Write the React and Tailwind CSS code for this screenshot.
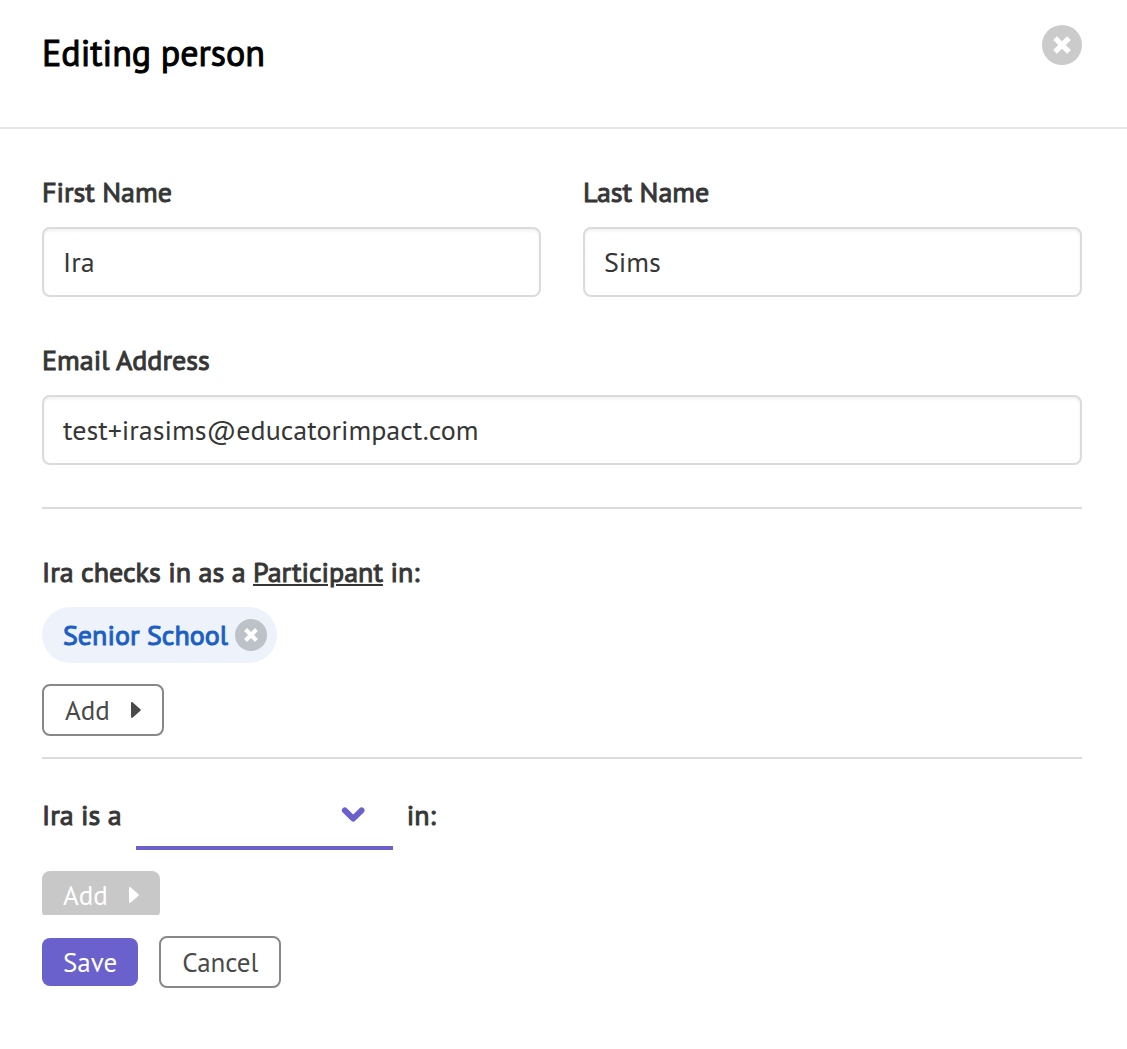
const strong = '[-webkit-text-stroke:1px_currentColor]'
const labelClass = `block text-[28px] leading-[34px] ${strong}`
const inputClass =
  'mt-[18px] block h-[70px] w-full rounded-lg border-2 border-[#dbdbdb] bg-white px-[19px] pb-0.5 text-[28px] text-[#363636] shadow-[inset_0_2px_3px_rgba(10,10,10,0.06)] outline-none'
const outlineButton = 'h-[52px] rounded-lg border-2 border-[#888] px-[21px] text-[27px] text-[#4a4a4a]'

function Cross({ size }) {
  return (
    <svg width={size} height={size} viewBox="0 0 17 17" fill="none" stroke="currentColor" aria-hidden="true">
      <path d="M1.9 1.9L15.1 15.1M15.1 1.9L1.9 15.1" strokeWidth="5" />
    </svg>
  )
}

function Caret() {
  return (
    <svg width="10" height="16" viewBox="0 0 10 16" fill="currentColor" aria-hidden="true">
      <path d="M0 1.2C0 .2 1 -.3 1.8 .4L9.4 7.2C9.9 7.7 9.9 8.3 9.4 8.8L1.8 15.6C1 16.3 0 15.8 0 14.8Z" />
    </svg>
  )
}

function Field({ id, label, value, type = 'text' }) {
  return (
    <div>
      <label htmlFor={id} className={labelClass}>
        {label}
      </label>
      <input id={id} type={type} defaultValue={value} className={inputClass} />
    </div>
  )
}

export default function App() {
  return (
    <div className="w-full bg-white pb-[61px] font-['PT_Sans','Noto_Sans',sans-serif] text-[#363636]">
      <header className="flex h-[129px] items-start justify-between border-b-2 border-[#e6e6e6] pl-[42px] pr-[45px] pt-[25px]">
        <h1 className={`text-4xl leading-[56px] text-black ${strong}`}>Editing person</h1>
        <button
          type="button"
          aria-label="Close"
          className="flex size-10 items-center justify-center rounded-full bg-[#cbcbcb] text-white"
        >
          <Cross size={18} />
        </button>
      </header>

      <form className="pl-[42px] pr-[45px] pt-[46px]">
        <div className="grid grid-cols-2 gap-[42px]">
          <Field id="first" label="First Name" value="Ira" />
          <Field id="last" label="Last Name" value="Sims" />
        </div>
        <div className="mt-[46px]">
          <Field id="email" label="Email Address" type="email" value="test+irasims@educatorimpact.com" />
        </div>
        <hr className="mt-[42px] border-t-2 border-[#dbdbdb]" />

        <h2 className={`mt-[46px] text-[28px] leading-[34px] ${strong}`}>
          Ira checks in as a <span className="underline">Participant</span> in:
        </h2>
        <div className="mt-[18px] flex h-14 w-fit items-center gap-[7px] rounded-full bg-[#edf2fb] pl-[21px] pr-2.5 text-[28px] text-[#1c5fc4]">
          <span className={strong}>Senior School</span>
          <button
            type="button"
            aria-label="Remove Senior School"
            className="flex size-8 items-center justify-center rounded-full bg-[#bdc1c8] text-white"
          >
            <Cross size={14} />
          </button>
        </div>
        <button type="button" className={`mt-[21px] flex items-center gap-[21px] ${outlineButton}`}>
          Add <Caret />
        </button>
        <hr className="mt-[21px] border-t-2 border-[#dbdbdb]" />

        <div className={`mt-[21px] flex h-[70px] items-center text-[28px] ${strong}`}>
          <label htmlFor="role">Ira is a</label>
          <div className="relative mx-3.5 h-full w-[257px]">
            <select
              id="role"
              className="block h-full w-full appearance-none border-b-4 border-[#6a61cc] bg-transparent outline-none"
            />
            <svg
              className="pointer-events-none absolute right-7 top-[27px] text-[#6a61cc]"
              width="24"
              height="16"
              viewBox="0 0 24 16"
              fill="none"
              stroke="currentColor"
              aria-hidden="true"
            >
              <path d="M3.8 3.4L12.2 11.6L20.6 3.4" strokeWidth="5.8" strokeLinecap="round" strokeLinejoin="round" />
            </svg>
          </div>
          <span>in:</span>
        </div>
        <div className="mt-[21px] h-11 overflow-hidden">
          <button
            type="button"
            disabled
            className="flex h-12 items-center gap-[21px] rounded-lg bg-[#c8c8c8] px-[21px] text-[27px] text-white"
          >
            Add <Caret />
          </button>
        </div>
        <div className="mt-[21px] flex items-center gap-[21px]">
          <button type="submit" className="h-12 rounded-lg bg-[#6a61cc] px-[21px] text-[27px] text-white">
            Save
          </button>
          <button type="button" className={outlineButton}>
            Cancel
          </button>
        </div>
      </form>
    </div>
  )
}
